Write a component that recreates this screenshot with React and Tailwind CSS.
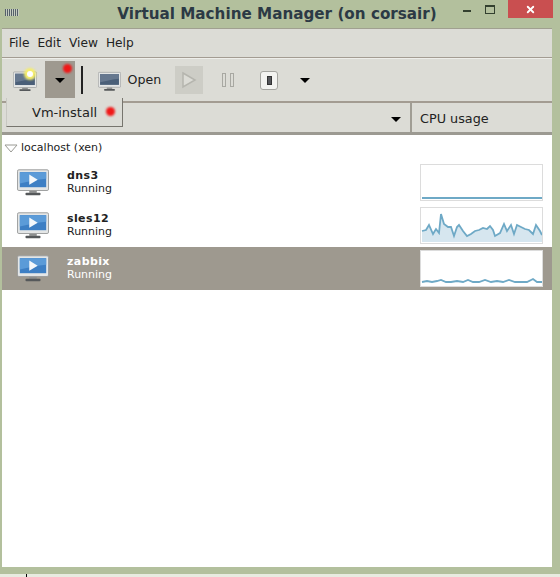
import React from "react";
import { FiX } from "react-icons/fi";

const vms = [
  {
    name: "dns3",
    line: "1,33 121,33",
    area: null,
  },
  {
    name: "sles12",
    line: "1,23 5,22 8,17 12,26 15,21 18,25 20,6 23,16 27,19 30,19 33,28 36,19 38,17 42,23 46,28 50,26 54,23 58,22 62,20 66,21 69,18 72,22 74,28 79,25 83,16 86,23 90,17 93,26 96,17 100,19 104,21 108,22 112,26 115,17 119,23 121,27",
    area: true,
  },
  {
    name: "zabbix",
    selected: true,
    line: "1,31 6,30 11,31 16,30 20,29 25,31 30,31 36,30 42,31 47,29 52,31 58,31 64,29 70,31 76,30 82,31 88,29 94,31 100,31 106,31 112,28 116,31 121,31",
  },
];

function Monitor({ w = 32, h = 27, play }) {
  return (
    <svg width={w} height={h} viewBox="0 0 34 28" className="shrink-0 block">
      <rect x="0.5" y="0.5" width="33" height="22" rx="1.5" fill="#e4e6e6" stroke="#9a9c9c" />
      <rect x="3" y="3" width="28" height="16" fill={play ? "#3d7fc4" : "#4a5f78"} />
      <path d="M3 3h28v7c-10 1-18 3-28 5z" fill={play ? "#5b9bd8" : "#66788f"} />
      {play && <path d="M13 5.5 L22 11 L13 16.5z" fill="#f4f8fb" />}
      <rect x="13" y="23" width="8" height="2" fill="#8c8e8e" />
      <rect x="9" y="25" width="16" height="2.5" rx="1" fill="#55585a" />
    </svg>
  );
}

function Spark({ line, area }) {
  return (
    <svg width="121" height="35" viewBox="0 0 121 35" className="block">
      {area && <polygon points={`1,34 ${line} 121,34`} fill="#d6e6ef" />}
      <polyline points={line} fill="none" stroke="#6ea9c6" strokeWidth="1.8" />
    </svg>
  );
}

function Caret({ className = "" }) {
  return <span className={`inline-block w-0 h-0 border-l-[5px] border-r-[5px] border-t-[5px] border-l-transparent border-r-transparent border-t-black ${className}`} />;
}

function RedDot({ className = "" }) {
  return <span className={`absolute w-[9px] h-[9px] rounded-full bg-[#f01818] blur-[1px] ${className}`} />;
}

export default function App() {
  return (
    <div className="w-[560px] h-[577px] overflow-hidden bg-[#b3c09d] flex flex-col text-[13px] text-[#222]" style={{ fontFamily: '"DejaVu Sans", sans-serif' }}>
      {/* title bar */}
      <div className="relative h-[28px] shrink-0 flex items-center justify-center">
        <div className="absolute left-[5px] top-[9px] w-[14px] h-[7px] bg-[repeating-linear-gradient(90deg,#55606a_0px,#55606a_1px,#c5ccc0_1px,#c5ccc0_2px)]" />
        <span className="font-bold text-[15.2px] text-[#2c3a45] ml-[-6px]">
          Virtual Machine Manager (on corsair)
        </span>
        <div className="absolute right-[7px] top-0 flex items-start">
          <span className="w-[8px] h-[2px] bg-[#33402f] mt-[10px] mr-[14px]" />
          <span className="w-[10px] h-[9px] border border-[#33402f] border-t-[2px] mt-[5px] mr-[13px]" />
          <span className="w-[45px] h-[18px] bg-[#c94f50] flex items-center justify-center text-white">
            <FiX size={11} strokeWidth={4} />
          </span>
        </div>
      </div>

      <div className="ml-[2px] mr-[8px] flex-1 flex flex-col bg-white border-t border-[#a0a090] min-h-0">
        {/* menu */}
        <div className="h-[29px] bg-[#dcdcd6] border-b border-[#a39c92] flex items-center gap-[8px] pl-[7px] text-[12.2px]">
          <span>File</span>
          <span>Edit</span>
          <span>View</span>
          <span>Help</span>
        </div>

        {/* toolbar */}
        <div className="relative h-[45px] bg-[#dcdcd6] border-t border-[#eeeeea] border-b-2 border-b-[#a39c92] flex items-center pl-[11px]">
          <div className="relative mt-[2px]">
            <Monitor w={24} h={21} />
            <span className="absolute left-[11px] top-[-3px] w-[12px] h-[12px] rounded-full bg-[#f6ee6a] blur-[1px]" />
            <span className="absolute left-[14px] top-[0px] w-[6px] h-[6px] rounded-full bg-white" />
          </div>
          <div className="relative w-[30px] h-[38px] ml-[8px] bg-[#9e998f] flex items-center justify-center">
            <Caret />
            <RedDot className="left-[18px] top-[3px]" />
          </div>
          <div className="w-[1.5px] h-[28px] bg-[#222] ml-[6px]" />
          <div className="ml-[15px] mt-[2px]">
            <Monitor w={23} h={21} />
          </div>
          <span className="ml-[7px] text-[12.6px]">Open</span>
          <div className="ml-[14px] w-[28px] h-[28px] bg-[#cdcdc6] flex items-center justify-center">
            <svg width="16" height="18" viewBox="0 0 16 18">
              <path d="M2 2 L14 9 L2 16z" fill="#dcdcd6" stroke="#b5b5ae" strokeWidth="1.5" />
            </svg>
          </div>
          <div className="ml-[19px] flex gap-[4px]">
            <span className="w-[4px] h-[14px] border border-[#a8a8a2]" />
            <span className="w-[4px] h-[14px] border border-[#a8a8a2]" />
          </div>
          <div className="ml-[26px] w-[18px] h-[19px] rounded-[3px] bg-[#f3f3f0] border border-[#a5a5a0] flex items-center justify-center">
            <span className="w-[5px] h-[9px] bg-[#55565a] border border-[#333]" />
          </div>
          <Caret className="ml-[22px]" />
        </div>

        {/* column headers */}
        <div className="relative h-[32px] bg-[#dcdcd6] border-b-[3px] border-b-[#9c9a92] flex items-center">
          <div className="flex-1 h-full flex items-center justify-end pt-[3px] pr-[9px] border-r-2 border-r-[#a09d94]">
            <Caret />
          </div>
          <div className="w-[140px] pl-[8px] pt-[3px] text-[12.8px]">CPU usage</div>

          {/* popup menu */}
          <div className="absolute left-[4px] top-[-5px] w-[117px] h-[29px] bg-[#dcdcd6] border-r border-b border-[#77756e] border-l border-l-[#c8c8c2] flex items-center pl-[25px] pt-[2px] text-[13px]">
            Vm-install
            <RedDot className="left-[99px] top-[9px]" />
          </div>
        </div>

        {/* list */}
        <div className="flex-1 bg-white min-h-0">
          <div className="h-[26px] flex items-center pl-[2px] text-[11px] gap-[3px] pt-[1px]">
            <svg width="14" height="9" viewBox="0 0 14 9">
              <path d="M1 1 H13 L7 8z" fill="none" stroke="#9a9a94" />
            </svg>
            <span>localhost (xen)</span>
          </div>
          {vms.map((vm) => (
            <div
              key={vm.name}
              className={`h-[43px] flex items-center pl-[15px] pr-[9px] ${vm.selected ? "bg-[#9e998f] text-white" : ""}`}
            >
              <Monitor play />
              <div className="ml-[18px] flex-1 leading-[13px] text-[11px] pb-[2px]">
                <div className="font-bold tracking-[0.4px]">{vm.name}</div>
                <div>Running</div>
              </div>
              <div className="w-[123px] h-[37px] bg-white border border-[#dcdcdc]">
                <Spark line={vm.line} area={vm.area} />
              </div>
            </div>
          ))}
        </div>
      </div>
      <div className="h-[7px] shrink-0 bg-[#b3c09d]" />
      <div className="relative h-[3px] shrink-0 bg-[#e8ebe0]">
        <span className="absolute left-[26px] top-0 w-px h-[3px] bg-black" />
      </div>
    </div>
  );
}
